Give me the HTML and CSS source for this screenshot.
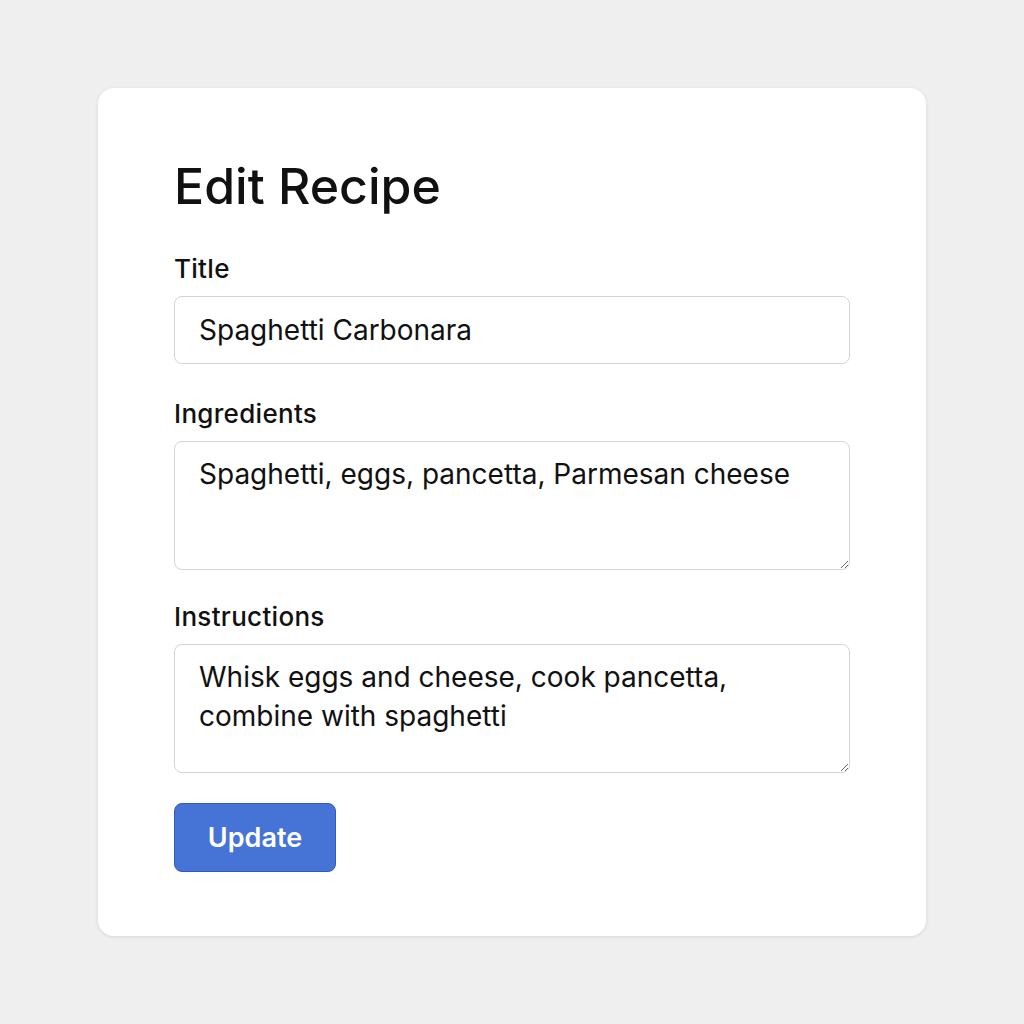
FILE: index.html
```html
<!DOCTYPE html>
<html>
<head>
<meta charset="utf-8">
<link rel="stylesheet" href="styles.css">
</head>
<body>
<div class="page">
  <form class="card">
    <h1 class="heading">Edit Recipe</h1>
    <label class="field">
      <span class="label">Title</span>
      <input class="input" type="text" value="Spaghetti Carbonara">
    </label>
    <label class="field field-tight">
      <span class="label">Ingredients</span>
      <textarea class="area">Spaghetti, eggs, pancetta, Parmesan cheese</textarea>
    </label>
    <label class="field field-tight">
      <span class="label">Instructions</span>
      <textarea class="area">Whisk eggs and cheese, cook pancetta, combine with spaghetti</textarea>
    </label>
    <div class="actions">
      <button class="btn" type="button">Update</button>
    </div>
  </form>
</div>
</body>
</html>
```
FILE: styles.css
```css
html, body {
  margin: 0;
  padding: 0;
  background: #efefef;
  font-family: Inter, "Noto Sans", sans-serif;
}
.page {
  width: 1024px;
  height: 1024px;
  padding-top: 88px;
  box-sizing: border-box;
  display: flex;
  justify-content: center;
  align-items: flex-start;
}
.card {
  width: 828px;
  height: 848px;
  box-sizing: border-box;
  background: #fff;
  border-radius: 16px;
  box-shadow: 0 1px 4px rgba(0,0,0,0.10);
  padding: 73px 76px 0 76px;
  display: flex;
  flex-direction: column;
}
.heading {
  margin: 0 0 41px 0;
  font-size: 50px;
  font-weight: 500;
  line-height: 50px;
  color: #111;
}
.field {
  display: flex;
  flex-direction: column;
  margin-bottom: 33px;
}
.field-tight {
  margin-bottom: 30px;
}
.label {
  font-size: 26px;
  font-weight: 500;
  letter-spacing: 0.3px;
  color: #111;
  line-height: 34px;
  margin-bottom: 10px;
}
.input, .area {
  width: 676px;
  box-sizing: border-box;
  border: 1.5px solid #d4d4d4;
  border-radius: 8px;
  font-family: Inter, "Noto Sans", sans-serif;
  font-size: 28px;
  color: #111;
  background: #fff;
  padding: 0 24px;
  outline: none;
}
.input {
  height: 68px;
}
.area {
  height: 129px;
  padding: 13px 30px 12px 24px;
  line-height: 39px;
  resize: vertical;
}
.actions {
  display: flex;
}
.btn {
  width: 162px;
  height: 69px;
  background: #4673d6;
  border: 1px solid #2f5bbd;
  border-radius: 8px;
  color: #fff;
  font-family: Inter, "Noto Sans", sans-serif;
  font-size: 27px;
  font-weight: 600;
}
```
